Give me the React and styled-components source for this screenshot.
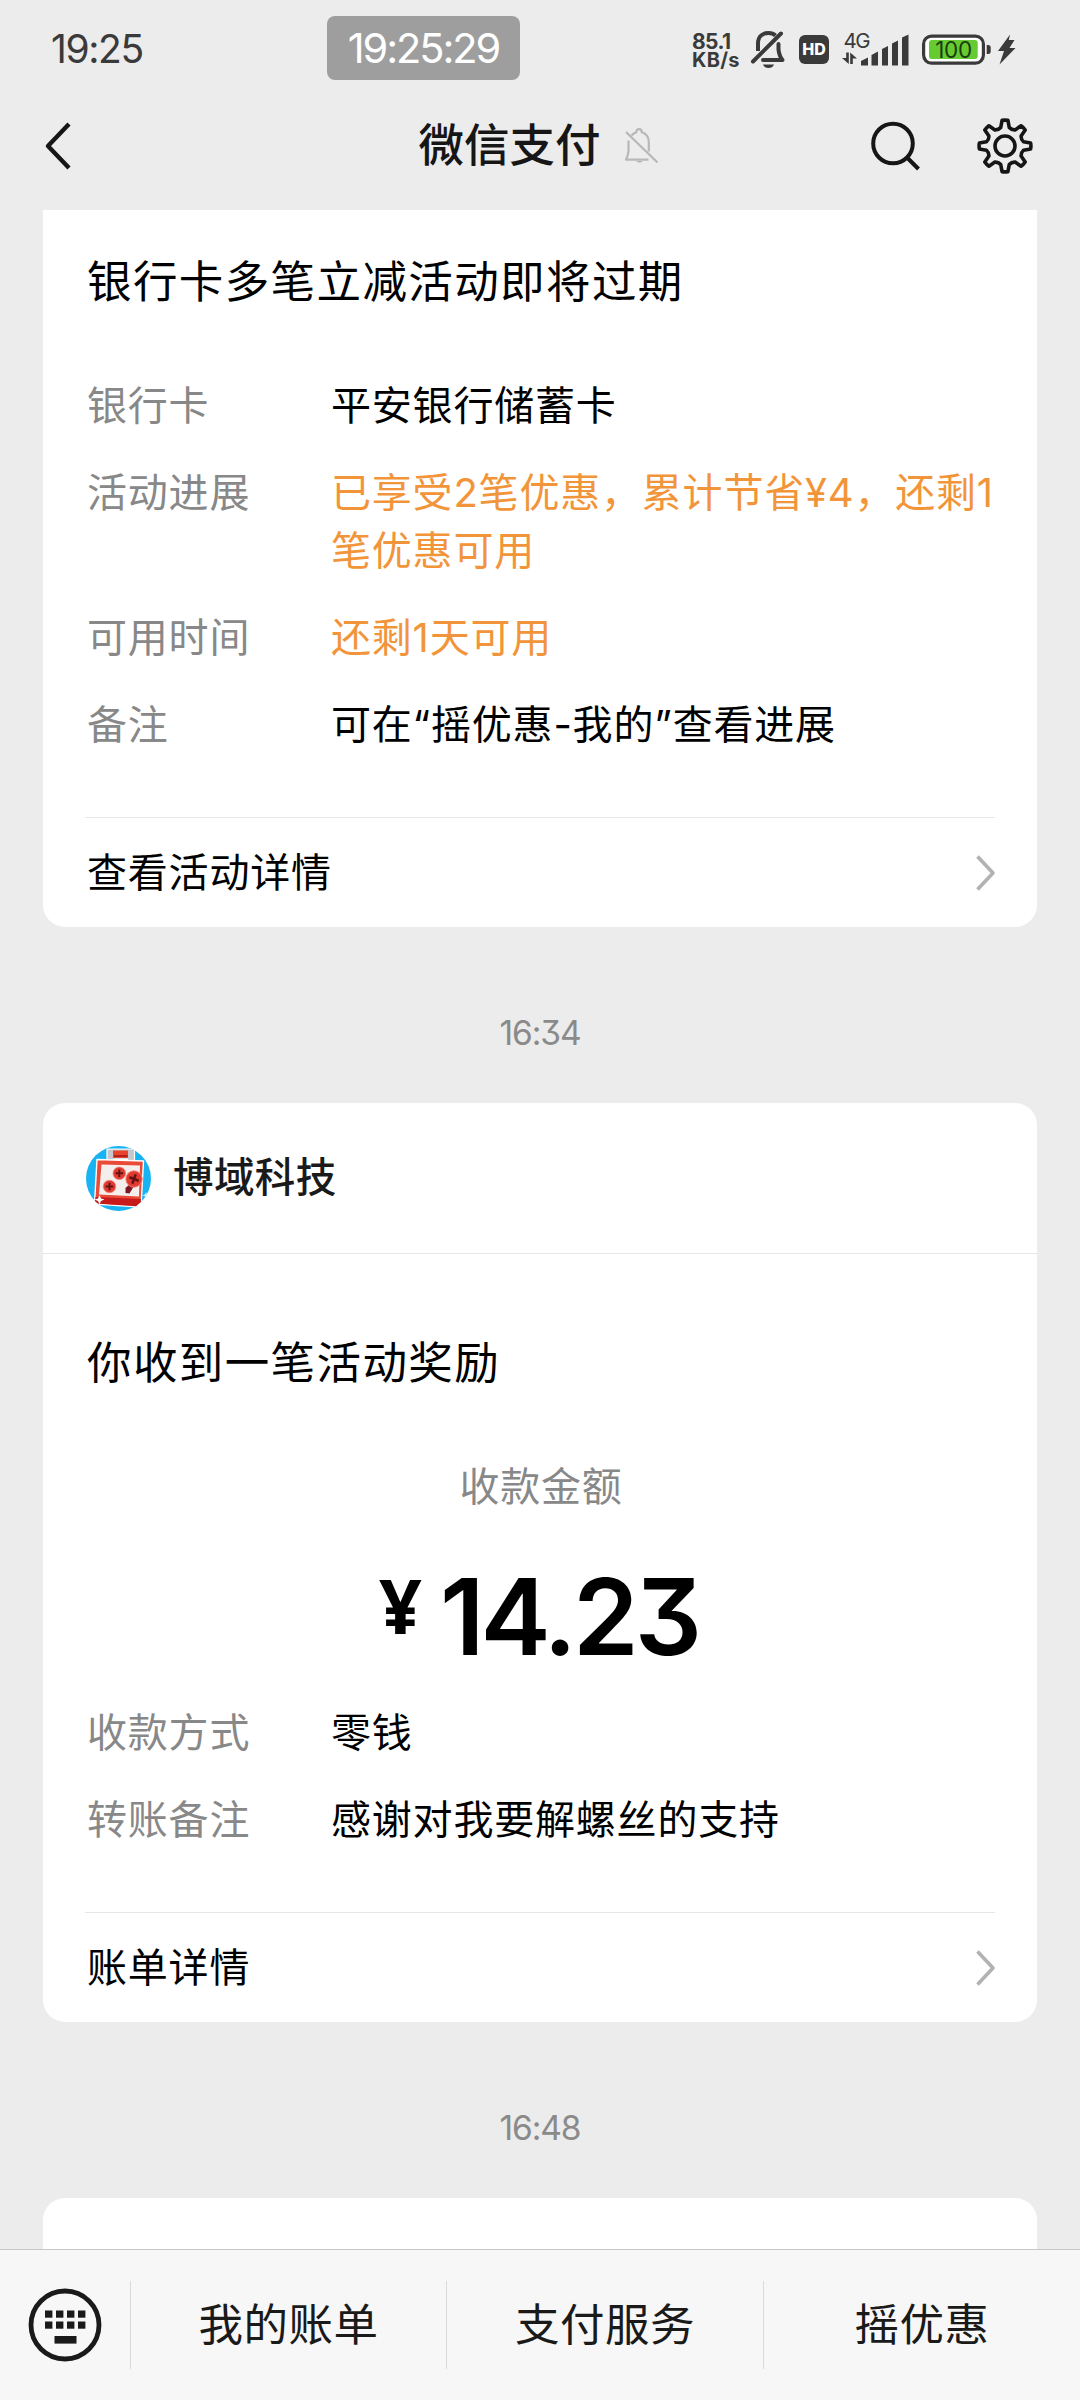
import React from "react"
import styled, { createGlobalStyle } from "styled-components"

const GlobalStyle = createGlobalStyle`
  * {
    box-sizing: border-box;
  }

  body {
    margin: 0;
    background: #ececec;
    font-family: "Inter", "Noto Sans CJK SC", sans-serif;
    font-feature-settings: "cv09";
    color: #000000;
  }

  svg {
    display: block;
    flex-shrink: 0;
    overflow: visible;
  }
`

const Screen = styled.div`
  width: 1080px;
  height: 2400px;
  display: flex;
  flex-direction: column;
  overflow: hidden;
  background: #ececec;
`

const StatusBar = styled.div`
  height: 96px;
  flex-shrink: 0;
  display: grid;
  grid-template-columns: 327px 193px 1fr;
  align-items: center;
  color: #3a3a3a;
`

const Clock = styled.span`
  padding: 2px 0 0 51px;
  font-size: 39px;
  line-height: 64px;
  letter-spacing: -1.4px;
`

const ClockPill = styled.div`
  height: 64px;
  border-radius: 8px;
  background: #9e9e9e;
  color: #ffffff;
  font-size: 41.5px;
  line-height: 65px;
  text-align: center;
  letter-spacing: -2.1px;
`

const StatusIcons = styled.div`
  display: flex;
  align-items: center;
  padding: 1px 0 0 172px;
`

const NetSpeed = styled.div`
  width: 59px;
  padding-top: 4px;
  font-size: 21px;
  line-height: 19px;
  font-weight: 700;
  letter-spacing: -0.6px;

  div + div {
    font-size: 20px;
    letter-spacing: 0.3px;
  }
`

const HdBadge = styled.div`
  width: 30px;
  height: 29px;
  margin: 1px 12px 0 14px;
  border-radius: 6px;
  background: #3a3a3a;
  color: #ffffff;
  font-size: 16px;
  line-height: 29px;
  font-weight: 800;
  text-align: center;
`

const NavBar = styled.div`
  height: 114px;
  flex-shrink: 0;
  display: grid;
  grid-template-columns: 200px 1fr 200px;
  align-items: center;
  padding: 0 47px 15px 43px;
  color: #161616;
`

const NavTitle = styled.div`
  display: flex;
  align-items: center;
  justify-content: center;
  gap: 23px;
`

const NavName = styled.h1`
  margin: 0;
  font-size: 45.5px;
  line-height: 60px;
  font-weight: 500;
`

const NavActions = styled.div`
  display: flex;
  align-items: center;
  justify-content: flex-end;
  gap: 57px;
`

const Feed = styled.div`
  flex: 1;
  min-height: 0;
  overflow: hidden;
  padding: 0 43px;
`

const Card = styled.div`
  background: #ffffff;
  border-radius: ${props => (props.$cut ? "0 0 22px 22px" : "22px")};
  overflow: hidden;
`

const NextCard = styled(Card)`
  height: 120px;
`

const Sender = styled.div`
  height: 151px;
  display: flex;
  align-items: center;
  gap: 22px;
  padding: 0 43px;
  border-bottom: 1px solid #e6e6e6;
  color: #1a1a1a;
  font-size: 40.5px;
  line-height: 58px;
  font-weight: 500;
  letter-spacing: 0.4px;
`

const CardBody = styled.div`
  padding: ${props => props.$top}px 42px 63px 44px;
`

const CardTitle = styled.h2`
  margin: 0 0 64px;
  font-size: 44.5px;
  line-height: 62px;
  font-weight: 400;
  letter-spacing: 1.4px;
`

const AmountLabel = styled.div`
  color: #888888;
  font-size: 40px;
  line-height: 58px;
  letter-spacing: 0.8px;
  text-align: center;
`

const Amount = styled.div`
  height: 188px;
  display: flex;
  align-items: baseline;
  justify-content: center;
  gap: 22px;
  padding-right: 5px;
  font-weight: 600;
  font-size: 105.5px;
  line-height: 202px;
  letter-spacing: -4px;
`

const Currency = styled.span`
  position: relative;
  top: -21px;
  font-family: "Open Sans", sans-serif;
  font-size: 75px;
  font-weight: 700;
  line-height: 1;
`

const Rows = styled.div`
  display: grid;
  row-gap: 29px;
`

const Row = styled.div`
  display: grid;
  grid-template-columns: 244px 1fr;
  font-size: 40px;
  line-height: 58px;
  letter-spacing: 0.8px;
`

const Label = styled.span`
  color: #888888;
`

const Value = styled.span`
  color: ${props => (props.$warn ? "#f2953a" : "#000000")};
  white-space: pre;
`

const CardLink = styled.div`
  height: 110px;
  margin: 0 42px;
  display: flex;
  align-items: center;
  justify-content: space-between;
  border-top: 1px solid #e6e6e6;
  font-size: 40px;
  line-height: 58px;
  letter-spacing: 0.8px;

  span {
    padding-left: 2px;
  }
`

const Time = styled.div`
  height: 176px;
  padding-top: 36px;
  display: flex;
  align-items: center;
  justify-content: center;
  color: #8a8a8a;
  font-size: 33.5px;
  letter-spacing: -1.1px;
`

const Menu = styled.div`
  height: 151px;
  flex-shrink: 0;
  display: grid;
  grid-template-columns: 130px 316px 317px 317px;
  align-items: start;
  padding-top: 31px;
  border-top: 1px solid #c8c8c8;
  background: #f7f7f7;
`

const MenuKey = styled.div`
  height: 88px;
  display: flex;
  align-items: center;
  justify-content: center;
`

const MenuItem = styled.div`
  height: 88px;
  border-left: 1px solid #dadada;
  color: #1a1a1a;
  font-size: 44.5px;
  line-height: 88px;
  letter-spacing: 0.5px;
  text-align: center;
`

function StatusBell() {
  return (
    <svg width="34" height="38" viewBox="0 0 34 38" fill="none" stroke="#3a3a3a" strokeWidth="4">
      <path d="M7 21V13.5C7 6 12 3 17.5 3C20.5 3 23 4 24.500 5.500" />
      <path d="M12 30H31.500C28.500 26.500 28 24 27.500 19.500V14" strokeLinejoin="round" strokeLinecap="round" />
      <path d="M2 31.500L30 3.500" strokeLinecap="round" />
      <path d="M12 34.500H23C21.500 39.300 13.500 39.300 12 34.500Z" fill="#3a3a3a" stroke="none" />
    </svg>
  )
}

function Signal() {
  return (
    <svg width="68" height="38" viewBox="0 0 68 38" fill="#3a3a3a">
      <text x="2.500" y="18" fontSize="20.500" letterSpacing="-1.500">4G</text>
      <path d="M5.200 22.500H7.800V34L1 28H5.200Z" />
      <path d="M9.200 34V22.500L16 28.500H11.800V34Z" />
      <path d="M20 31L27 27.500V35.500H20Z" />
      <path d="M30.500 25L37 21.500V35.500H30.500Z" />
      <path d="M41 19L47 16V35.500H41Z" />
      <path d="M51 13.500L57 10.500V35.500H51Z" />
      <path d="M61 7.500L67.500 4.500V35.500H61Z" />
    </svg>
  )
}

function Battery() {
  return (
    <svg width="94" height="38" viewBox="0 0 94 38">
      <rect x="1.600" y="6.100" width="59.800" height="27" rx="8" fill="#ffffff" stroke="#3a3a3a" strokeWidth="3.200" />
      <rect x="7" y="10" width="48.700" height="19" rx="3" fill="#66cb30" />
      <text x="31.500" y="27.800" fontSize="22.500" textAnchor="middle" fill="#1d3a10" letterSpacing="-0.300">100</text>
      <path d="M64.700 15H66.500Q68.700 15 68.700 17.500V21.500Q68.700 24 66.500 24H64.700Z" fill="#3a3a3a" />
      <path d="M88 4.500L76 21H82L77.500 34.500L93.500 18H87.500L92.500 10H86.800Z" fill="#3a3a3a" />
    </svg>
  )
}

function BackIcon() {
  return (
    <svg width="28" height="48" viewBox="0 0 28 48" fill="none" stroke="currentColor" strokeWidth="4.400">
      <path d="M26 2L5 24L26 46" strokeLinejoin="round" />
    </svg>
  )
}

function MutedBell() {
  return (
    <svg width="34" height="38" viewBox="0 0 34 38" fill="none" stroke="#b8b8b8" strokeWidth="2.200">
      <path d="M4.500 13.500V24C4.500 27.500 3 30 2 32.700H24.500" strokeLinejoin="round" />
      <path d="M7.500 8.500C9 6.500 10.500 5.800 12.200 5.200C12.200 1 17.800 1 17.800 5.200C22 6.500 24.800 10 24.800 15V24.500" />
      <path d="M2 5L33.500 35.500" />
      <path d="M12.500 34H18.500C18 36.300 13 36.300 12.500 34Z" fill="#b8b8b8" stroke="none" />
    </svg>
  )
}

function SearchIcon() {
  return (
    <svg width="50" height="50" viewBox="0 0 50 50" fill="none" stroke="currentColor" strokeWidth="4">
      <circle cx="23" cy="22.500" r="19.800" />
      <path d="M37.500 37L48.500 48" />
    </svg>
  )
}

// eight teeth, one every 45 degrees
const gearPath = (() => {
  const at = (r, deg) => {
    const a = (deg * Math.PI) / 180
    return `${(28 + r * Math.sin(a)).toFixed(2)} ${(28 - r * Math.cos(a)).toFixed(2)}`
  }
  let d = ""
  for (let i = 0; i < 8; i++) {
    const c = i * 45
    d += `${i ? "L" : "M"}${at(19, c - 13)}L${at(25.8, c - 6.5)}Q${at(26.2, c)} ${at(25.8, c + 6.5)}L${at(19, c + 13)}Q${at(17.2, c + 22.5)} ${at(19, c + 32)}`
  }
  return d + "Z"
})()

function GearIcon() {
  return (
    <svg width="56" height="56" viewBox="0 0 56 56" fill="none" stroke="currentColor" strokeWidth="3.600" strokeLinejoin="round">
      <path d={gearPath} />
      <circle cx="28" cy="28" r="10" />
    </svg>
  )
}

function Chevron() {
  return (
    <svg width="19" height="36" viewBox="0 0 19 36" fill="none" stroke="#b2b2b2" strokeWidth="3.600">
      <path d="M1.500 1.500L17 18L1.500 34.500" strokeLinejoin="round" />
    </svg>
  )
}

function KeyboardIcon() {
  return (
    <svg width="74" height="74" viewBox="0 0 74 74" fill="#1a1a1a">
      <circle cx="37" cy="37" r="34" fill="none" stroke="#1a1a1a" strokeWidth="4.800" />
      {[17, 28, 39, 50].map(x => (
        <React.Fragment key={x}>
          <rect x={x} y="22.500" width="7.400" height="7.200" />
          <rect x={x} y="33.500" width="7.400" height="7.200" />
        </React.Fragment>
      ))}
      <rect x="26.500" y="48" width="22" height="7.600" />
    </svg>
  )
}

function Screw({ x, y, r }) {
  return (
    <g transform={`translate(${x} ${y})`}>
      <circle r={r} fill="#e23a31" stroke="#f58a7c" strokeWidth="0.800" />
      <path d={`M0 ${-r * 0.6}V${r * 0.6}M${-r * 0.6} 0H${r * 0.6}`} stroke="#5f1413" strokeWidth={r * 0.32} />
    </g>
  )
}

function Avatar() {
  return (
    <svg width="65" height="65" viewBox="0 0 65 65">
      <clipPath id="avatar-round">
        <circle cx="32.500" cy="32.500" r="32.500" />
      </clipPath>
      <g clipPath="url(#avatar-round)">
        <rect width="65" height="65" fill="#18b3f3" />
        <path d="M21 3H48.500V17H21Z" fill="#c5c7cc" stroke="#ffffff" strokeWidth="1.200" />
        <path d="M27 4.500H42V12H27Z" fill="#e8432d" />
        <path d="M28 9H41.500V11H28Z" fill="#b3201b" />
        <path d="M27.500 12.500H42V15H27.500Z" fill="#ffffff" />
        <path d="M11 13.500L57.500 15L55 61L8.500 58Z" fill="#ea4a38" stroke="#ffffff" strokeWidth="1.400" strokeLinejoin="round" />
        <path d="M15.500 18.500L54 19.500L53 50.500L13 48.500Z" fill="#f4efed" />
        <path d="M9.500 51L55 53L54.500 60.500L9 57.500Z" fill="#c81a1a" />
        <path d="M46 36L39.500 42V47L43.500 47.500L48 40Z" fill="#7c1620" />
        <Screw x={33.3} y={27.3} r={6.3} />
        <Screw x={23.5} y={40.5} r={6.3} />
        <g transform="rotate(20 48 33)">
          <Screw x={48} y={33} r={8.2} />
        </g>
        <path d="M13.500 49L15 52.500L18.500 53.500L15 55L13.500 58.500L12 55L8.500 53.500L12 52.500Z" fill="#ffffff" />
        <path d="M60 46L61 48.500L63.500 49.500L61 50.500L60 53L59 50.500L56.500 49.500L59 48.500Z" fill="#d8f3ff" />
      </g>
    </svg>
  )
}

const promoRows = [
  { label: "银行卡", value: "平安银行储蓄卡" },
  { label: "活动进展", value: "已享受2笔优惠，累计节省¥4，还剩1\n笔优惠可用", warn: true },
  { label: "可用时间", value: "还剩1天可用", warn: true },
  { label: "备注", value: "可在“摇优惠-我的”查看进展" },
]

const rewardRows = [
  { label: "收款方式", value: "零钱" },
  { label: "转账备注", value: "感谢对我要解螺丝的支持" },
]

function Details({ items }) {
  return (
    <Rows>
      {items.map(item => (
        <Row key={item.label}>
          <Label>{item.label}</Label>
          <Value $warn={item.warn}>{item.value}</Value>
        </Row>
      ))}
    </Rows>
  )
}

const BatterySlot = styled.div`
  margin-left: 13px;
`

export default function App() {
  return (
    <Screen lang="zh-CN">
      <GlobalStyle />
      <StatusBar>
        <Clock>19:25</Clock>
        <ClockPill>19:25:29</ClockPill>
        <StatusIcons>
          <NetSpeed>
            <div>85.1</div>
            <div>KB/s</div>
          </NetSpeed>
          <StatusBell />
          <HdBadge>HD</HdBadge>
          <Signal />
          <BatterySlot>
            <Battery />
          </BatterySlot>
        </StatusIcons>
      </StatusBar>
      <NavBar>
        <BackIcon />
        <NavTitle>
          <NavName>微信支付</NavName>
          <MutedBell />
        </NavTitle>
        <NavActions>
          <SearchIcon />
          <GearIcon />
        </NavActions>
      </NavBar>
      <Feed>
        <Card $cut>
          <CardBody $top={41}>
            <CardTitle>银行卡多笔立减活动即将过期</CardTitle>
            <Details items={promoRows} />
          </CardBody>
          <CardLink>
            <span>查看活动详情</span>
            <Chevron />
          </CardLink>
        </Card>
        <Time>16:34</Time>
        <Card>
          <Sender>
            <Avatar />
            博域科技
          </Sender>
          <CardBody $top={78}>
            <CardTitle>你收到一笔活动奖励</CardTitle>
            <AmountLabel>收款金额</AmountLabel>
            <Amount>
              <Currency>¥</Currency>
              14.23
            </Amount>
            <Details items={rewardRows} />
          </CardBody>
          <CardLink>
            <span>账单详情</span>
            <Chevron />
          </CardLink>
        </Card>
        <Time>16:48</Time>
        <NextCard />
      </Feed>
      <Menu>
        <MenuKey>
          <KeyboardIcon />
        </MenuKey>
        <MenuItem>我的账单</MenuItem>
        <MenuItem>支付服务</MenuItem>
        <MenuItem>摇优惠</MenuItem>
      </Menu>
    </Screen>
  )
}
